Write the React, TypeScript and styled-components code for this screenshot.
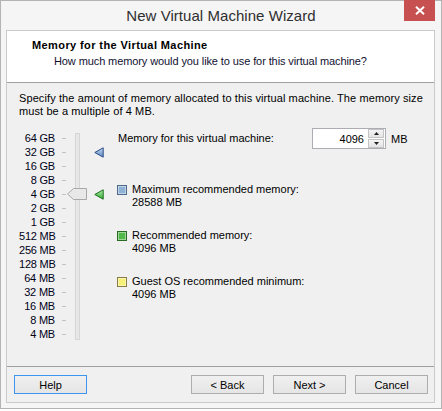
import React from 'react';
import styled, { createGlobalStyle } from 'styled-components';

const FONT = `"Liberation Sans", Arial, sans-serif`;

const GlobalStyle = createGlobalStyle`
  html, body {
    margin: 0;
    padding: 0;
    background: #ffffff;
  }
  body {
    font-family: ${FONT};
    font-size: 11px;
    color: #000000;
  }
  * {
    box-sizing: border-box;
  }
`;

const Window = styled.div`
  width: 442px;
  height: 409px;
  background: #f5f5f5;
  border: 1px solid #b4b4b4;
  display: flex;
  flex-direction: column;
`;

const TitleBar = styled.div`
  position: relative;
  height: 29px;
  display: flex;
  align-items: center;
  justify-content: center;
  padding-bottom: 1px;
`;

const Title = styled.div`
  font-size: 15px;
  color: #2f2f2f;
  letter-spacing: 0.05px;
`;

const CloseButton = styled.div`
  position: absolute;
  top: -1px;
  right: 6px;
  width: 31px;
  height: 21px;
  background: #c75050;
  display: flex;
  align-items: center;
  justify-content: center;
`;

const Client = styled.div`
  margin: 0 6px 0 5px;
  height: 373px;
  border: 1px solid #cacaca;
  background: #f0f0f0;
  display: flex;
  flex-direction: column;
`;

const Header = styled.div`
  height: 52px;
  background: #ffffff;
  border-bottom: 1px solid #a0a0a0;
  padding: 8px 0 0 25px;
`;

const HeaderTitle = styled.div`
  font-weight: bold;
  font-size: 11px;
  line-height: 13px;
  letter-spacing: 0.4px;
`;

const HeaderSubtitle = styled.div`
  margin: 3px 0 0 22px;
  line-height: 13px;
  color: #101030;
  letter-spacing: -0.1px;
`;

const Body = styled.div`
  flex: 1;
  padding: 9px 0 0 12px;
  display: flex;
  flex-direction: column;
`;

const Description = styled.div`
  line-height: 13px;
  letter-spacing: 0.1px;
`;

const Main = styled.div`
  margin-top: 10px;
  display: flex;
  align-items: flex-start;
`;

const Scale = styled.div`
  margin-top: 3px;
  display: flex;
`;

const LabelColumn = styled.div`
  width: 36px;
  display: flex;
  flex-direction: column;
`;

const ScaleLabel = styled.div`
  height: 14px;
  line-height: 14px;
  text-align: right;
  white-space: nowrap;
  color: #000018;
  letter-spacing: -0.2px;
`;

const TickColumn = styled.div`
  margin-left: 7px;
  width: 4px;
  display: flex;
  flex-direction: column;
`;

const Tick = styled.div`
  height: 14px;
  display: flex;
  align-items: center;
  &::before {
    content: '';
    display: block;
    width: 4px;
    height: 1px;
    background: #c4c4c4;
  }
`;

const TrackColumn = styled.div`
  position: relative;
  margin-left: 9px;
  width: 5px;
  height: 210px;
  padding: 2px 0 1px;
`;

const Track = styled.div`
  height: 100%;
  border: 1px solid #d6d6d6;
  background: #e7e7e7;
`;

const Thumb = styled.svg`
  position: absolute;
  left: -8px;
  top: 57px;
`;

const MarkerColumn = styled.div`
  margin-left: 14px;
  width: 10px;
  display: flex;
  flex-direction: column;
`;

const MarkerRow = styled.div`
  height: 14px;
  display: flex;
  align-items: center;
`;

const Settings = styled.div`
  margin-left: 14px;
  flex: 1;
  display: flex;
  flex-direction: column;
`;

const MemoryRow = styled.div`
  height: 21px;
  display: flex;
  align-items: center;
`;

const MemoryLabel = styled.div`
  width: 194px;
  line-height: 13px;
`;

const SpinBox = styled.div`
  width: 74px;
  height: 21px;
  border: 1px solid #abadb3;
  background: #ffffff;
  display: flex;
  align-items: center;
`;

const SpinValue = styled.div`
  flex: 1;
  text-align: right;
  padding-right: 4px;
`;

const SpinButtons = styled.div`
  width: 17px;
  height: 19px;
  display: flex;
  flex-direction: column;
  gap: 1px;
  padding: 0 1px 0 0;
`;

const SpinButton = styled.div`
  flex: 1;
  border: 1px solid #c4c4c4;
  background: linear-gradient(#f4f4f4, #e4e4e4);
  display: flex;
  align-items: center;
  justify-content: center;
`;

const Unit = styled.div`
  margin-left: 5px;
`;

const Legend = styled.div`
  margin-top: 34px;
  display: flex;
  flex-direction: column;
  gap: 20px;
`;

const LegendItem = styled.div`
  display: flex;
  flex-direction: column;
`;

const LegendHeading = styled.div`
  display: flex;
  align-items: center;
  line-height: 13px;
`;

const Swatch = styled.div<{ $fill: string; $edge: string }>`
  width: 10px;
  height: 10px;
  margin: 0 5px 0 -1px;
  border: 1px solid ${(p) => p.$edge};
  background: ${(p) => p.$fill};
  box-shadow: inset 0 0 0 1px rgba(255, 255, 255, 0.45);
`;

const LegendValue = styled.div`
  padding-left: 14px;
  line-height: 13px;
`;

const Separator = styled.div`
  height: 1px;
  background: #a0a0a0;
`;

const ButtonBar = styled.div`
  height: 35px;
  padding: 8px 6px 0 7px;
  display: flex;
  align-items: flex-start;
  gap: 9px;
`;

const Spacer = styled.div`
  flex: 1;
`;

const Button = styled.div<{ $focused?: boolean }>`
  width: 73px;
  height: 19px;
  border: 1px solid ${(p) => (p.$focused ? '#3c96ee' : '#adadad')};
  background: linear-gradient(#f0f0f0, #e5e5e5);
  display: flex;
  align-items: center;
  justify-content: center;
  color: #000000;
`;

const scaleLabels = [
  '64 GB',
  '32 GB',
  '16 GB',
  '8 GB',
  '4 GB',
  '2 GB',
  '1 GB',
  '512 MB',
  '256 MB',
  '128 MB',
  '64 MB',
  '32 MB',
  '16 MB',
  '8 MB',
  '4 MB',
];

const Marker = ({ kind }: { kind: 'blue' | 'green' }) => {
  const light = kind === 'blue' ? '#c6daf2' : '#b6f0b0';
  const dark = kind === 'blue' ? '#5a86c4' : '#2ea82e';
  const edge = kind === 'blue' ? '#2c4c86' : '#17701a';
  const id = `mk-${kind}`;
  return (
    <svg width="10" height="11" viewBox="0 0 10 11">
      <defs>
        <linearGradient id={id} x1="0" y1="0" x2="0" y2="1">
          <stop offset="0" stopColor={light} />
          <stop offset="1" stopColor={dark} />
        </linearGradient>
      </defs>
      <polygon points="0.8,5.5 9.2,0.8 9.2,10.2" fill={`url(#${id})`} stroke={edge} strokeWidth="1" strokeLinejoin="round" />
    </svg>
  );
};

const legend = [
  { label: 'Maximum recommended memory:', value: '28588 MB', fill: '#8fb1d4', edge: '#4f6a8c' },
  { label: 'Recommended memory:', value: '4096 MB', fill: '#52b84a', edge: '#2a6a26' },
  { label: 'Guest OS recommended minimum:', value: '4096 MB', fill: '#f6ef78', edge: '#8a7a40' },
];

export default function App() {
  return (
    <>
      <GlobalStyle />
      <Window>
        <TitleBar>
          <Title>New Virtual Machine Wizard</Title>
          <CloseButton>
            <svg width="10" height="9" viewBox="0 0 10 9">
              <path d="M1 0.8 L9 8.2 M9 0.8 L1 8.2" stroke="#ffffff" strokeWidth="2" />
            </svg>
          </CloseButton>
        </TitleBar>
        <Client>
          <Header>
            <HeaderTitle>Memory for the Virtual Machine</HeaderTitle>
            <HeaderSubtitle>How much memory would you like to use for this virtual machine?</HeaderSubtitle>
          </Header>
          <Body>
            <Description>
              Specify the amount of memory allocated to this virtual machine. The memory size
              <br />
              must be a multiple of 4 MB.
            </Description>
            <Main>
              <Scale>
                <LabelColumn>
                  {scaleLabels.map((l) => (
                    <ScaleLabel key={l}>{l}</ScaleLabel>
                  ))}
                </LabelColumn>
                <TickColumn>
                  {scaleLabels.map((l) => (
                    <Tick key={l} />
                  ))}
                </TickColumn>
                <TrackColumn>
                  <Track />
                  <Thumb width="20" height="12" viewBox="0 0 20 12">
                    <polygon points="0.5,6 6.5,0.5 19.5,0.5 19.5,11.5 6.5,11.5" fill="#e8e8e8" stroke="#a8a8a8" strokeWidth="1" />
                  </Thumb>
                </TrackColumn>
                <MarkerColumn>
                  {scaleLabels.map((l, i) => (
                    <MarkerRow key={l}>
                      {i === 1 && <Marker kind="blue" />}
                      {i === 4 && <Marker kind="green" />}
                    </MarkerRow>
                  ))}
                </MarkerColumn>
              </Scale>
              <Settings>
                <MemoryRow>
                  <MemoryLabel>Memory for this virtual machine:</MemoryLabel>
                  <SpinBox>
                    <SpinValue>4096</SpinValue>
                    <SpinButtons>
                      <SpinButton>
                        <svg width="5" height="3" viewBox="0 0 5 3">
                          <polygon points="2.5,0 5,3 0,3" fill="#202020" />
                        </svg>
                      </SpinButton>
                      <SpinButton>
                        <svg width="5" height="3" viewBox="0 0 5 3">
                          <polygon points="0,0 5,0 2.5,3" fill="#202020" />
                        </svg>
                      </SpinButton>
                    </SpinButtons>
                  </SpinBox>
                  <Unit>MB</Unit>
                </MemoryRow>
                <Legend>
                  {legend.map((item) => (
                    <LegendItem key={item.label}>
                      <LegendHeading>
                        <Swatch $fill={item.fill} $edge={item.edge} />
                        {item.label}
                      </LegendHeading>
                      <LegendValue>{item.value}</LegendValue>
                    </LegendItem>
                  ))}
                </Legend>
              </Settings>
            </Main>
          </Body>
          <Separator />
          <ButtonBar>
            <Button $focused>Help</Button>
            <Spacer />
            <Button>&lt; Back</Button>
            <Button>Next &gt;</Button>
            <Button>Cancel</Button>
          </ButtonBar>
        </Client>
      </Window>
    </>
  );
}
